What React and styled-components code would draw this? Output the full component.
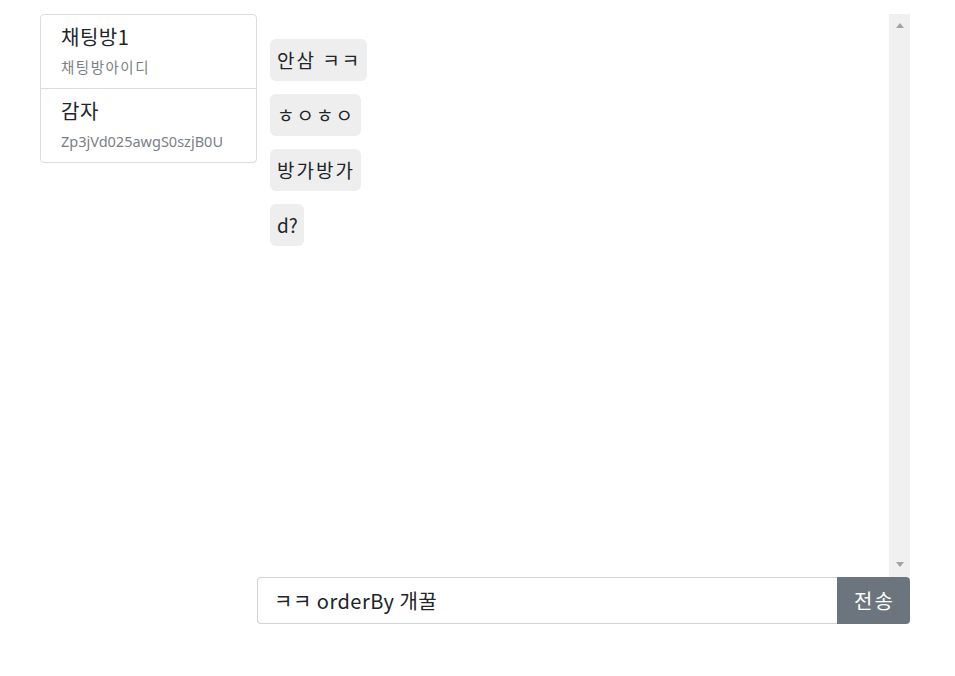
import React from "react";
import styled, { createGlobalStyle } from "styled-components";

const Global = createGlobalStyle`
  html, body { margin: 0; padding: 0; background: #fff; }
  body {
    font-family: "Noto Sans", "Noto Sans CJK KR", sans-serif;
    color: #212529;
  }
  * { box-sizing: border-box; }
`;

const Page = styled.div`
  display: flex;
  align-items: flex-start;
  padding: 14px 45px 0 40px;
`;

const RoomList = styled.ul`
  list-style: none;
  margin: 0;
  padding: 0;
  width: 217px;
  flex: none;
  border: 1px solid #dcdcdc;
  border-radius: 4px;
`;

const RoomItem = styled.li`
  padding: 10px 20px 11px;
  border-top: ${(p) => (p.$first ? "none" : "1px solid #dcdcdc")};
  display: flex;
  flex-direction: column;
  gap: 8px;
`;

const RoomTitle = styled.div`
  font-family: "Noto Sans CJK KR", sans-serif;
  font-size: 20px;
  line-height: 24px;
  letter-spacing: 0.5px;
  color: #212529;
`;

const RoomId = styled.div`
  font-family: "Noto Sans", "Noto Sans CJK KR", sans-serif;
  font-size: 14.5px;
  line-height: 20px;
  letter-spacing: ${(p) => (p.$hangul ? "1.5px" : "0")};
  color: #7a7f85;
`;

const ChatColumn = styled.div`
  flex: 1;
  display: flex;
  flex-direction: column;
`;

const ChatPanel = styled.div`
  display: flex;
  height: 563px;
`;

const Messages = styled.div`
  flex: 1;
  overflow-y: auto;
  padding: 25px 13px;
  display: flex;
  flex-direction: column;
  align-items: flex-start;
  gap: 13px;
`;

const ScrollTrack = styled.div`
  width: 21px;
  flex: none;
  background: #f0f0f0;
  display: flex;
  flex-direction: column;
  justify-content: space-between;
  align-items: center;
  padding: 9px 0 10px;
`;

const Arrow = styled.div`
  width: 0;
  height: 0;
  border-left: 4.5px solid transparent;
  border-right: 4.5px solid transparent;
  ${(p) =>
    p.$down
      ? "border-top: 5px solid #a3a3a3;"
      : "border-bottom: 5px solid #a3a3a3;"}
`;

const Bubble = styled.div`
  background: #eeeeee;
  border-radius: 6px;
  padding: 8px 6px 8px 7px;
  font-family: "Noto Sans CJK KR", sans-serif;
  font-size: 19px;
  line-height: 26px;
  letter-spacing: ${(p) => (p.$latin ? "0" : "2px")};
  color: #212529;
`;

const InputRow = styled.form`
  display: flex;
  height: 47px;
  margin: 0;
`;

const TextInput = styled.input`
  flex: 1;
  min-width: 0;
  height: 100%;
  border: 1px solid #ced4da;
  border-right: none;
  border-radius: 4px 0 0 4px;
  padding: 0 16px;
  font-family: "Noto Sans CJK KR", sans-serif;
  font-size: 20px;
  letter-spacing: 0.5px;
  color: #212529;
  outline: none;
`;

const SendButton = styled.button`
  width: 73px;
  height: 100%;
  border: none;
  border-radius: 0 4px 4px 0;
  background: #6c757d;
  color: #fff;
  font-family: "Noto Sans CJK KR", sans-serif;
  font-size: 20px;
  letter-spacing: 2px;
  padding: 0 0 0 2px;
  cursor: pointer;
`;

const rooms = [
  { title: "채팅방1", id: "채팅방아이디", hangul: true },
  { title: "감자", id: "Zp3jVd025awgS0szjB0U", hangul: false },
];

const messages = ["안삼 ㅋㅋ", "ㅎㅇㅎㅇ", "방가방가", "d?"];

export default function App() {
  return (
    <>
      <Global />
      <Page>
        <RoomList>
          {rooms.map((r, i) => (
            <RoomItem key={r.id} $first={i === 0}>
              <RoomTitle>{r.title}</RoomTitle>
              <RoomId $hangul={r.hangul}>{r.id}</RoomId>
            </RoomItem>
          ))}
        </RoomList>
        <ChatColumn>
          <ChatPanel>
            <Messages>
              {messages.map((m, i) => (
                <Bubble key={i} $latin={/^[\x00-\x7f]+$/.test(m)}>
                  {m}
                </Bubble>
              ))}
            </Messages>
            <ScrollTrack aria-hidden="true">
              <Arrow />
              <Arrow $down />
            </ScrollTrack>
          </ChatPanel>
          <InputRow onSubmit={(e) => e.preventDefault()}>
            <TextInput defaultValue="ㅋㅋ orderBy 개꿀" />
            <SendButton type="submit">전송</SendButton>
          </InputRow>
        </ChatColumn>
      </Page>
    </>
  );
}
